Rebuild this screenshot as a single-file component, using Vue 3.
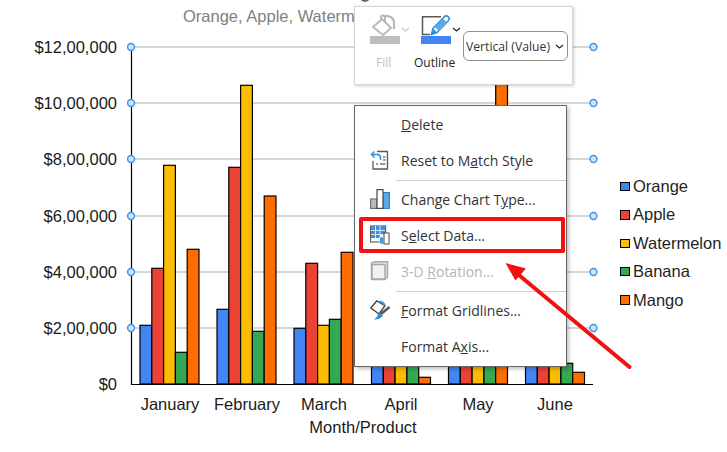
<script setup>
const colors = ['#4285f4', '#ea4335', '#fbbc04', '#34a853', '#ff6d01']
const groups = [
  { x: 140, tops: [325.3, 268.3, 165.3, 352.3, 249.3] },
  { x: 217, tops: [309.3, 167.3, 85.3, 331.3, 196] },
  { x: 294, tops: [328.3, 263.3, 325.3, 319.3, 252.3] },
  { x: 371.5, tops: [340, 340, 340, 340, 377.3] },
  { x: 448.5, tops: [340, 340, 340, 340, 70] },
  { x: 525.5, tops: [340, 340, 340, 363.3, 372.3] }
]
const bars = groups.flatMap((g) =>
  g.tops.map((top, i) => ({ x: g.x + i * 11.8, y: top, h: 384 - top, fill: colors[i] }))
)
const ticks = [
  { y: 47, label: '$12,00,000' },
  { y: 103, label: '$10,00,000' },
  { y: 159, label: '$8,00,000' },
  { y: 216, label: '$6,00,000' },
  { y: 272, label: '$4,00,000' },
  { y: 328, label: '$2,00,000' }
]
const months = [
  { x: 170, t: 'January' },
  { x: 247, t: 'February' },
  { x: 324, t: 'March' },
  { x: 401, t: 'April' },
  { x: 478, t: 'May' },
  { x: 555, t: 'June' }
]
const legend = [
  { n: 'Orange', c: colors[0] },
  { n: 'Apple', c: colors[1] },
  { n: 'Watermelon', c: colors[2] },
  { n: 'Banana', c: colors[3] },
  { n: 'Mango', c: colors[4] }
]
</script>

<template>
  <div class="page">
    <svg class="chart" width="727" height="452" viewBox="0 0 727 452">
      <text x="183" y="22" class="title">Orange, Apple, Watermelon, Banana, Mango</text>
      <line v-for="t in ticks" :key="t.y" x1="131" x2="593" :y1="t.y" :y2="t.y" class="grid" />
      <rect v-for="(b, i) in bars" :key="i" :x="b.x" :y="b.y" width="11.8" :height="b.h" :fill="b.fill" class="bar" />
      <line x1="131.5" x2="131.5" y1="47" y2="384.5" class="axis" />
      <line x1="131" x2="593" y1="384.5" y2="384.5" class="axis" />
      <text x="117" y="389.5" class="tick end">$0</text>
      <text v-for="t in ticks" :key="t.label" x="117" :y="t.y + 5.5" class="tick end">{{ t.label }}</text>
      <text v-for="m in months" :key="m.t" :x="m.x" y="409.5" class="tick mid">{{ m.t }}</text>
      <text x="363" y="433" class="tick mid">Month/Product</text>
      <g v-for="t in ticks" :key="'h' + t.y">
        <circle cx="131" :cy="t.y" r="3.4" class="handle" />
        <circle cx="593.5" :cy="t.y" r="3.4" class="handle" />
      </g>
      <circle cx="365" cy="-3" r="5" fill="#666" />
    </svg>

    <ul class="legend">
      <li v-for="l in legend" :key="l.n" class="legend-item">
        <span class="swatch" :style="{ background: l.c }"></span>{{ l.n }}
      </li>
    </ul>

    <div class="toolbar">
      <div class="tool muted">
        <div class="tool-top">
          <svg width="30" height="32" viewBox="0 0 30 32">
            <path d="M3 13 L12 5 L21 14 L13 21 Z" fill="#fff" stroke="#b9b9b9" stroke-width="2" />
            <path d="M11 6 V2.5 Q13 0 15 2.5 V9" fill="none" stroke="#b9b9b9" stroke-width="2" />
            <path d="M13 2 Q24 1 24 9 V15" fill="none" stroke="#b9b9b9" stroke-width="2.2" />
            <rect x="0" y="22" width="30" height="8" fill="#bdbdbd" />
          </svg>
          <svg class="chev" width="9" height="5" viewBox="0 0 9 5"><path d="M1 1 L4.5 4 L8 1" fill="none" stroke="#c4c4c4" stroke-width="1.1" /></svg>
        </div>
        <span class="tool-label">Fill</span>
      </div>
      <div class="tool">
        <div class="tool-top">
          <svg width="30" height="32" viewBox="0 0 30 32">
            <path d="M20 2.7 H1.5 V20.5 H9" fill="none" stroke="#595959" stroke-width="1.5" />
            <path d="M10.5 20.5 L12 14.5 L23.5 2.5 Q25.5 1 27.5 3 Q29 5 27.5 6.5 L16 18.5 Z" fill="#fff" stroke="#2f8fdc" stroke-width="1.6" />
            <path d="M10.5 20.5 L12 14.5 L16 18.5 Z" fill="#2f8fdc" />
            <path d="M14 13 L18 17 L26 8.5 L22 4.5 Z" fill="#58a9e8" />
            <rect x="0" y="22" width="30" height="8" fill="#4285f4" />
          </svg>
          <svg class="chev" width="9" height="5" viewBox="0 0 9 5"><path d="M1 1 L4.5 4 L8 1" fill="none" stroke="#222" stroke-width="1.2" /></svg>
        </div>
        <span class="tool-label">Outline</span>
      </div>
      <div class="select">
        <span class="select-text">Vertical (Value)</span>
        <svg width="9" height="5" viewBox="0 0 9 5"><path d="M1 1 L4.5 4 L8 1" fill="none" stroke="#222" stroke-width="1.2" /></svg>
      </div>
    </div>

    <div class="menu">
      <div class="item">
        <span class="icon"></span>
        <span><u>D</u>elete</span>
      </div>
      <div class="item">
        <svg class="icon" width="20" height="20" viewBox="0 0 20 20">
          <path d="M7 1.5 H17.5 V19 H3 V11" fill="#fff" stroke="#595959" stroke-width="1.3" />
          <path d="M4.5 1.5 L1.5 4.5 L4.5 7.5 M2 4.5 H8 Q10.5 5 10.5 8 V10" fill="none" stroke="#2f8fdc" stroke-width="1.5" />
          <path d="M13 7 H15.5 M13 10 H15.5 M6 14 H8 M10 14 H15.5" stroke="#777" stroke-width="1.3" />
        </svg>
        <span>Reset to M<u>a</u>tch Style</span>
      </div>
      <div class="sep"></div>
      <div class="item">
        <svg class="icon" width="20" height="20" viewBox="0 0 20 20">
          <rect x="0.6" y="10" width="6.4" height="9.4" fill="#bcbcbc" stroke="#6b6b6b" stroke-width="1.1" />
          <rect x="13" y="3.5" width="6.4" height="15.9" fill="#5ba8e6" stroke="#2f7fc4" stroke-width="1.1" />
          <rect x="7" y="0.6" width="6" height="18.8" fill="#fff" stroke="#4a4a4a" stroke-width="1.2" />
        </svg>
        <span>Change Chart T<u>y</u>pe...</span>
      </div>
      <div class="item">
        <svg class="icon" width="20" height="20" viewBox="0 0 20 20">
          <rect x="0.6" y="1" width="15" height="16" fill="#fff" stroke="#595959" stroke-width="1.1" />
          <path d="M1 1 H15 V10 H10 V13 H1 Z" fill="#3f8edc" />
          <path d="M1 5.5 H15 M1 9.5 H15 M5.5 1 V13 M10 1 V10" stroke="#d7e8f7" stroke-width="1" />
          <rect x="9.5" y="12" width="4" height="7" fill="#4a9ade" stroke="#fff" stroke-width="0.6" />
          <rect x="14" y="8" width="5" height="11" fill="#fff" stroke="#595959" stroke-width="1.1" />
        </svg>
        <span>S<u>e</u>lect Data...</span>
      </div>
      <div class="item disabled">
        <svg class="icon" width="20" height="20" viewBox="0 0 20 20">
          <path d="M1.5 2 L5 0.8 H17.5 V16 L15 18.6 H1.5 Z" fill="#e6e6e6" stroke="#a8a8a8" stroke-width="1.5" />
          <rect x="2" y="3.5" width="13" height="14.5" fill="#f2f2f2" stroke="#a8a8a8" stroke-width="1.5" />
        </svg>
        <span>3-D <u>R</u>otation...</span>
      </div>
      <div class="sep"></div>
      <div class="item">
        <svg class="icon" width="20" height="20" viewBox="0 0 20 20">
          <path d="M0.8 8 L6.7 1 L15 5.7 L9 14 Z" fill="#fff" stroke="#444" stroke-width="1.4" />
          <path d="M9 1.5 Q14 2 14.5 5.5" fill="none" stroke="#3f9ae4" stroke-width="2" />
          <path d="M19.5 7 L11 14" stroke="#555" stroke-width="2.6" />
          <path d="M10 12.5 L13 15.5 Q10 20 3.5 19.5 Q7.5 17.5 7.5 15 Z" fill="#2f8fdc" />
        </svg>
        <span><u>F</u>ormat Gridlines...</span>
      </div>
      <div class="item">
        <span class="icon"></span>
        <span>Format A<u>x</u>is...</span>
      </div>
    </div>

    <div class="highlight"></div>

    <svg class="arrow" width="140" height="120" viewBox="500 258 140 120">
      <line x1="629.5" y1="367" x2="514" y2="271" stroke="#f40f10" stroke-width="4" stroke-linecap="round" />
      <path d="M505.5 263 L526 268.5 L515.5 280.5 Z" fill="#f40f10" />
    </svg>
  </div>
</template>

<style>
html, body { margin: 0; background: #fff; }
</style>

<style scoped>
.page {
  position: relative;
  width: 727px;
  height: 452px;
  overflow: hidden;
  background: #fff;
  font-family: "Liberation Sans", Arial, sans-serif;
}
.chart { position: absolute; left: 0; top: 0; }
.title { font-size: 16.5px; fill: #808080; font-family: "Liberation Sans", Arial, sans-serif; }
.grid { stroke: #b0b0b0; stroke-width: 1.2; }
.axis { stroke: #000; stroke-width: 1.2; }
.bar { stroke: #000; stroke-width: 1.2; }
.tick { font-size: 16.5px; fill: #1a1a1a; font-family: "Liberation Sans", Arial, sans-serif; }
.end { text-anchor: end; }
.mid { text-anchor: middle; }
.handle { fill: #cfe5fb; stroke: #3d97e6; stroke-width: 1.5; }

.legend {
  position: absolute;
  left: 620px;
  top: 177px;
  margin: 0;
  padding: 0;
  list-style: none;
  display: flex;
  flex-direction: column;
  gap: 9.4px;
  font-size: 16.5px;
  color: #1f1f1f;
}
.legend-item { display: flex; align-items: center; height: 19px; line-height: 19px; }
.swatch {
  width: 7.5px;
  height: 7.5px;
  border: 1px solid #000;
  margin-right: 3.5px;
  flex: none;
}

.toolbar {
  position: absolute;
  left: 354px;
  top: 6px;
  width: 219px;
  height: 79px;
  box-sizing: border-box;
  background: #fff;
  border: 1px solid #d6d6d6;
  box-shadow: 1px 1px 3px rgba(0, 0, 0, 0.2);
  font-family: "Open Sans", "Noto Sans", sans-serif;
  display: flex;
  align-items: flex-start;
  padding: 7px 0 0 15px;
}
.tool { display: flex; flex-direction: column; width: 51px; color: #222; }
.tool-top { display: flex; align-items: flex-start; height: 32px; }
.chev { margin: 13px 0 0 1px; flex: none; }
.tool-label { font-size: 12px; line-height: 16px; margin-top: 9px; margin-left: 6px; }
.tool:nth-child(2) .tool-label { margin-left: -7px; }
.muted { color: #c0c0c0; }
.select {
  box-sizing: border-box;
  width: 105px;
  height: 30px;
  margin: 17px 0 0 -9px;
  border: 1px solid #8f8f8f;
  border-radius: 6px;
  display: flex;
  align-items: center;
  padding: 0 3px 0 2px;
  gap: 2px;
  background: #fff;
  flex: none;
}
.select-text {
  flex: 1;
  overflow: hidden;
  white-space: nowrap;
  font-size: 12.2px;
  color: #333;
}

.menu {
  position: absolute;
  left: 354px;
  top: 105px;
  width: 213px;
  height: 262px;
  box-sizing: border-box;
  background: #fff;
  border: 1px solid #666;
  box-shadow: 2px 2px 4px rgba(0, 0, 0, 0.25);
  font-family: "Open Sans", "Noto Sans", sans-serif;
  font-size: 14px;
  color: #333;
}
.item {
  height: 36px;
  display: flex;
  align-items: center;
  padding-left: 15px;
  white-space: nowrap;
}
.icon { width: 20px; height: 20px; margin-right: 11px; flex: none; display: block; }
.disabled { color: #b4b4b4; }
.sep { height: 1px; background: #cfcfcf; margin: 2px 0 0 41px; }

.highlight {
  position: absolute;
  left: 359px;
  top: 217px;
  width: 206px;
  height: 36px;
  box-sizing: border-box;
  border: 4px solid #f40f10;
  border-radius: 2px;
}
.arrow { position: absolute; left: 500px; top: 258px; }
</style>
